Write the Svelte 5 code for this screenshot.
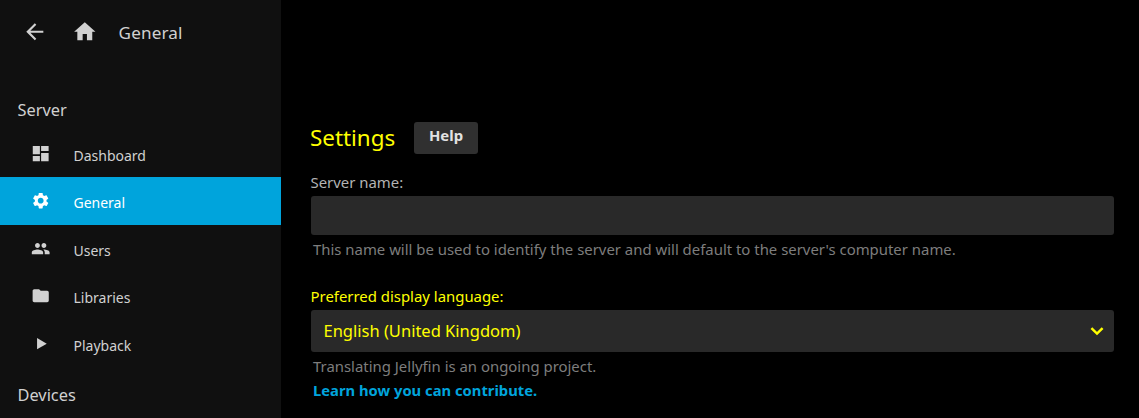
<script>
  const icons = {
    back: 'M20 11H7.83l5.59-5.59L12 4l-8 8 8 8 1.41-1.41L7.83 13H20v-2z',
    home: 'M10 20v-6h4v6h5v-8h3L12 3 2 12h3v8z',
    dashboard: 'M2.200 12.800h8.800V2.500H2.200v10.300zm0 8.700h8.800v-6.500H2.200v6.500zm10.300 0h9.300V11h-9.300v10.500zm0-19v6.300h9.300V2.500h-9.300z',
    settings:
      'M19.14 12.94c.04-.3.06-.61.06-.94 0-.32-.02-.64-.07-.94l2.03-1.58c.18-.14.23-.41.12-.61l-1.92-3.32c-.12-.22-.37-.29-.59-.22l-2.39.96c-.5-.38-1.03-.7-1.62-.94l-.36-2.54c-.04-.24-.24-.41-.48-.41h-3.84c-.24 0-.43.17-.47.41l-.36 2.54c-.59.24-1.13.57-1.62.94l-2.39-.96c-.22-.08-.47 0-.59.22L2.74 8.87c-.12.21-.08.47.12.61l2.03 1.58c-.05.3-.09.63-.09.94s.02.64.07.94l-2.03 1.58c-.18.14-.23.41-.12.61l1.92 3.32c.12.22.37.29.59.22l2.39-.96c.5.38 1.03.7 1.62.94l.36 2.54c.05.24.24.41.48.41h3.84c.24 0 .44-.17.47-.41l.36-2.54c.59-.24 1.13-.56 1.62-.94l2.39.96c.22.08.47 0 .59-.22l1.92-3.32c.12-.22.07-.47-.12-.61l-2.01-1.58zM12 15.6c-1.98 0-3.6-1.62-3.6-3.6s1.62-3.6 3.6-3.6 3.6 1.62 3.6 3.6-1.62 3.6-3.6 3.6z',
    people:
      'M16 11c1.66 0 2.99-1.34 2.99-3S17.66 5 16 5s-3 1.34-3 3 1.34 3 3 3zm-8 0c1.66 0 2.99-1.34 2.99-3S9.66 5 8 5 5 6.34 5 8s1.34 3 3 3zm0 2c-2.33 0-7 1.17-7 3.5V19h14v-2.500c0-2.330-4.670-3.500-7-3.500zm8 0c-.29 0-.62.02-.97.05 1.160.84 1.970 1.970 1.970 3.450V19h6v-2.500c0-2.330-4.670-3.500-7-3.500z',
    folder: 'M10 4H4c-1.100 0-1.990.9-1.990 2L2 18c0 1.100.9 2 2 2h16c1.100 0 2-.9 2-2V8c0-1.100-.9-2-2-2h-8l-2-2z',
    play: 'M7.500 5v14l12-7z'
  };

  const links = [
    { label: 'Dashboard', icon: 'dashboard' },
    { label: 'General', icon: 'settings', active: true },
    { label: 'Users', icon: 'people' },
    { label: 'Libraries', icon: 'folder' },
    { label: 'Playback', icon: 'play' }
  ];
</script>

{#snippet icon(name)}
  <svg class="icon" viewBox="0 0 24 24" aria-hidden="true"><path d={icons[name]} /></svg>
{/snippet}

<div class="page">
  <aside>
    <header>
      <button class="nav" aria-label="Back">{@render icon('back')}</button>
      <button class="nav" aria-label="Home">{@render icon('home')}</button>
      <h1>General</h1>
    </header>
    <h3>Server</h3>
    <nav>
      {#each links as link}
        <a href="#top" class:active={link.active}>
          {@render icon(link.icon)}
          <span>{link.label}</span>
        </a>
      {/each}
    </nav>
    <h3 class="next">Devices</h3>
  </aside>

  <main>
    <div class="title">
      <h2>Settings</h2>
      <button class="help">Help</button>
    </div>

    <div class="field">
      <label for="name">Server name:</label>
      <input id="name" type="text" />
      <p>This name will be used to identify the server and will default to the server's computer name.</p>
    </div>

    <div class="field language">
      <div class="label">Preferred display language:</div>
      <div class="select">
        <span>English (United Kingdom)</span>
        <svg class="chevron" viewBox="0 0 14 9" aria-hidden="true"><path d="M1.400 1.200 7 6.600l5.600-5.400" /></svg>
      </div>
      <p>Translating Jellyfin is an ongoing project.</p>
      <a class="learn" href="#top">Learn how you can contribute.</a>
    </div>
  </main>
</div>

<style>
  :global(body) {
    margin: 0;
    background: #000;
  }
  .page {
    display: flex;
    height: 418px;
    overflow: hidden;
    background: #000;
    color: #d1d1d1;
    font-family: 'Noto Sans', sans-serif;
    font-size: 14.920px;
  }
  h1, h2, h3, p {
    margin: 0;
    font-weight: 400;
  }
  button {
    border: 0;
    padding: 0;
    font-family: inherit;
    color: inherit;
  }
  .icon {
    display: block;
    fill: currentColor;
    width: 19.400px;
    height: 19.400px;
    flex: none;
  }
  aside {
    width: 281px;
    flex: none;
    background: #101010;
  }
  header {
    display: flex;
    align-items: center;
    height: 64px;
    padding-left: 22.300px;
  }
  .nav {
    background: none;
    margin-right: 24.200px;
  }
  .nav .icon {
    width: 25.600px;
    height: 25.600px;
  }
  h1 {
    font-size: 17.100px;
    letter-spacing: 0.140px;
    line-height: 24px;
    margin: 1px 0 0 -3.300px;
  }
  h3 {
    font-size: 16.370px;
    line-height: 24px;
    padding-left: 17.500px;
    margin-top: 34px;
    margin-bottom: 7.600px;
  }
  nav a {
    display: flex;
    align-items: center;
    box-sizing: border-box;
    height: 47.500px;
    padding-left: 31.300px;
    color: inherit;
    text-decoration: none;
    font-size: 14px;
  }
  nav span {
    margin: 4px 0 0 22.800px;
  }
  nav .active {
    background: #00a4dc;
    color: #fff;
  }
  h3.next {
    margin-top: 15.900px;
  }
  main {
    flex: 1;
    padding: 122px 25px 0 30px;
  }
  .title {
    display: flex;
    align-items: center;
    height: 32px;
  }
  h2 {
    color: #ff0;
    font-size: 22.400px;
    line-height: 32px;
    width: 104px;
    margin-left: -1px;
  }
  .help {
    width: 64px;
    height: 32px;
    padding-bottom: 6px;
    border-radius: 3px;
    background: #303030;
    color: #e2e2e2;
    font-size: 14.880px;
    line-height: 20px;
    font-weight: 700;
  }
  .field {
    display: flex;
    flex-direction: column;
    margin-top: 17px;
  }
  label, .label {
    line-height: 22px;
    margin: 0 0 3px -0.500px;
    color: #b3b3b3;
  }
  input {
    height: 39px;
    box-sizing: border-box;
    border: 0;
    border-radius: 3px;
    background: #292929;
  }
  p, .learn {
    padding-left: 2px;
    line-height: 24px;
    color: #7d7d7d;
  }
  input + p,
  .select + p {
    padding-top: 2px;
  }
  .language {
    margin-top: 24px;
  }
  .language .label {
    color: #ff0;
  }
  .select {
    display: flex;
    align-items: center;
    justify-content: space-between;
    height: 42px;
    box-sizing: border-box;
    padding: 0 10px 1px 12.500px;
    border-radius: 3px;
    background: #292929;
    color: #ff0;
    font-size: 16.500px;
  }
  .chevron {
    width: 14px;
    height: 9px;
    margin-top: 2px;
    fill: none;
    stroke: #ff0;
    stroke-width: 2.500;
  }
  .learn {
    color: #00a4dc;
    font-size: 14.780px;
    font-weight: 700;
    text-decoration: none;
  }
</style>
